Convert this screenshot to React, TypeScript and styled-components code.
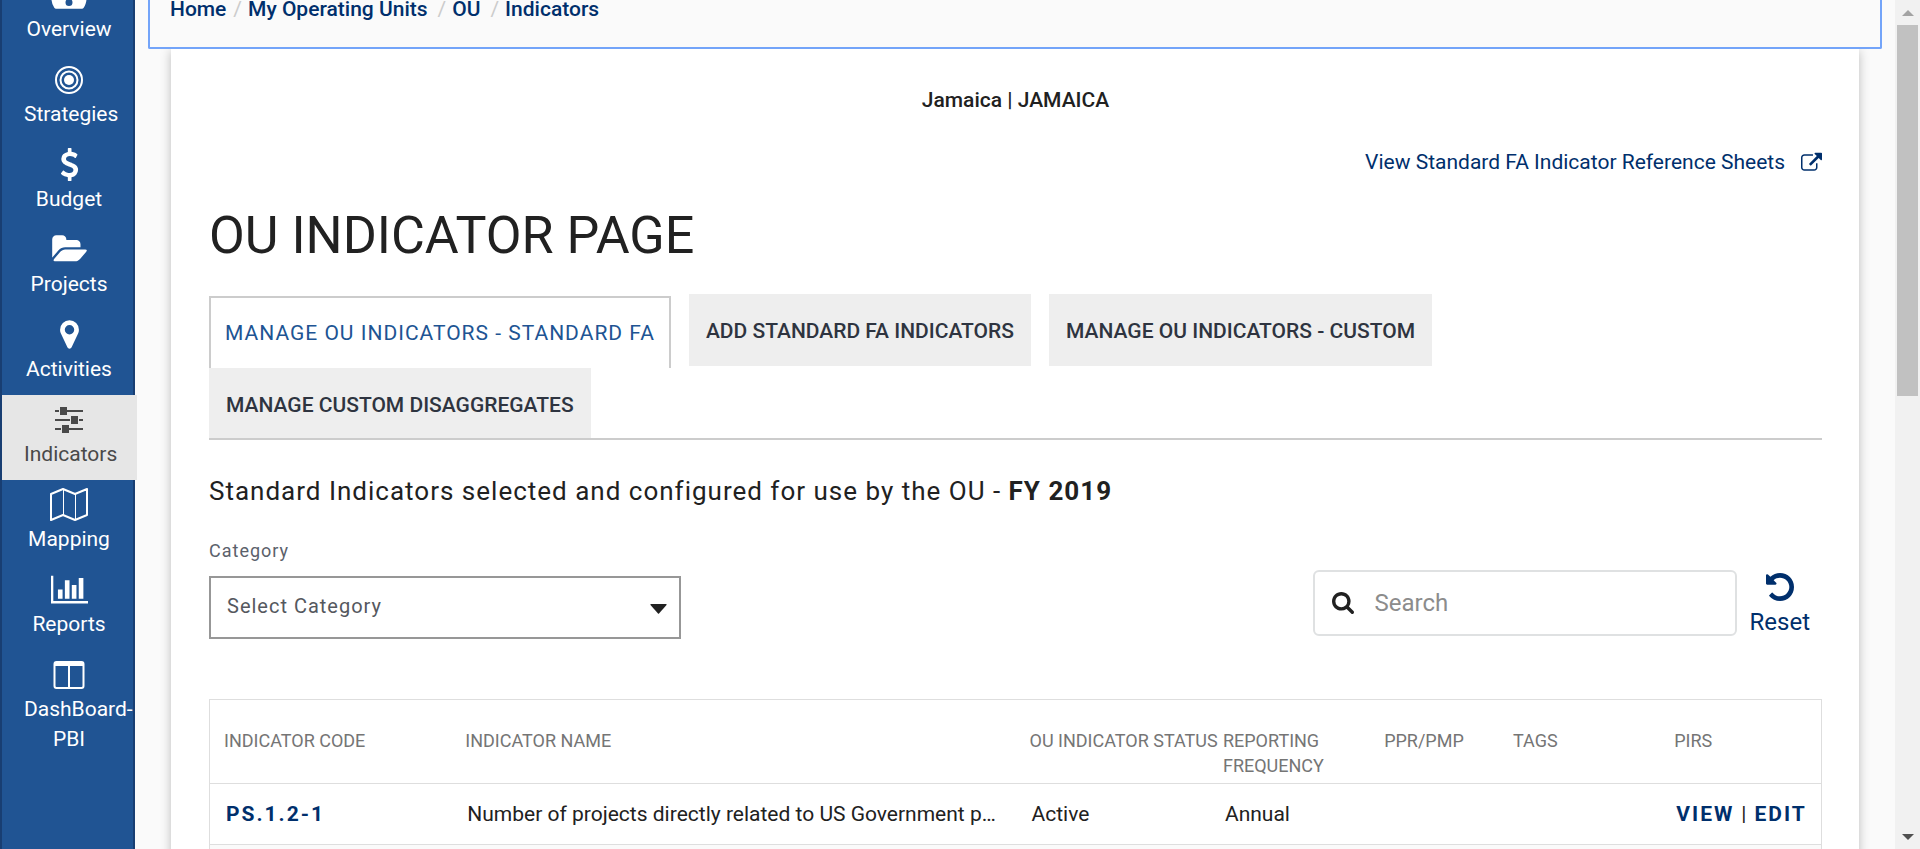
import React from 'react';
import styled, { createGlobalStyle, css } from 'styled-components';

const navy = '#002f6c';
const blue = '#205493';

const GlobalStyle = createGlobalStyle`
  *, *::before, *::after { box-sizing: border-box; }
  body {
    margin: 0;
    overflow: hidden;
    background: #fafafa;
    color: #212121;
    font-family: Roboto, "Liberation Sans", sans-serif;
    font-size: 21px;
    line-height: 30px;
  }
  a { color: ${navy}; text-decoration: none; }
`;

const Shell = styled.div`
  display: flex;
  height: 100vh;
  overflow: hidden;
`;

const Sidebar = styled.nav`
  flex: 0 0 135px;
  min-width: 0;
  height: 100vh;
  background: ${blue};
  border: solid #183e72;
  border-width: 0 2px;
`;

const NavList = styled.ul`
  list-style: none;
  margin: -30px 0 0;
  padding: 0;
`;

const NavLink = styled.a<{ $active?: boolean }>`
  display: block;
  width: 135px;
  min-height: 85px;
  padding: 8px 23px 11px 22px;
  color: #fff;
  text-align: center;
  ${p => p.$active && css`
    position: relative;
    background: #e6e6e6;
    color: #494949;
  `}
`;

const NavIcon = styled.span`
  display: flex;
  align-items: center;
  justify-content: center;
  height: 33px;
  margin-bottom: 3px;
  svg { display: block; }
`;

const Main = styled.main`
  flex: 1;
  min-width: 0;
  padding: 0 13px;
`;

const Breadcrumb = styled.nav`
  display: flex;
  height: 49px;
  padding: 0 20px;
  border: solid #73a4f9;
  border-width: 0 2px 2px;
  border-radius: 0 0 2px 2px;
  position: relative;
  z-index: 1;
  background: #fafafa;
`;

const Crumbs = styled.ol`
  display: flex;
  list-style: none;
  margin: -6px 0 0;
  padding: 0;
  font-weight: 500;
`;

const Crumb = styled.li<{ $gap?: number }>`
  &:not(:first-child)::before {
    content: '/';
    padding: 0 6px 0 ${p => p.$gap ?? 7}px;
    color: #ccc;
    font-weight: 400;
  }
`;

const Card = styled.section`
  margin: 0 23px;
  padding: 36px 37px 0 38px;
  background: #fff;
  box-shadow: 0 2px 10px rgba(0, 0, 0, 0.25);
`;

const UnitName = styled.p`
  margin: 0;
  text-align: center;
  font-weight: 500;
`;

const ReferenceLink = styled.div`
  margin-top: 32px;
  text-align: right;
  a { display: inline-flex; align-items: center; gap: 16px; }
`;

const Title = styled.h1`
  margin: 29px 0 28px;
  font-size: 52px;
  line-height: 60px;
  font-weight: 400;
`;

const Tabs = styled.div`
  position: relative;
  display: flex;
  flex-wrap: wrap;
  align-items: flex-start;
  column-gap: 18px;
  &::after {
    content: '';
    position: absolute;
    inset: auto 0 0;
    height: 2px;
    background: #ccc;
  }
`;

const Tab = styled.button<{ $active?: boolean }>`
  height: 72px;
  padding: 2px 15px 0;
  border: 2px solid #eee;
  background: #eee;
  color: #2e3440;
  font: 500 21px/30px Roboto, sans-serif;
  text-transform: uppercase;
  ${p => p.$active && css`
    margin-top: 2px;
    padding: 0 14px;
    border-color: #ccc;
    border-bottom: 0;
    background: #fff;
    color: ${blue};
    font-weight: 400;
    letter-spacing: 1px;
  `}
`;

const Subtitle = styled.h2`
  margin: 32px 0 0;
  font-size: 26px;
  line-height: 38px;
  font-weight: 400;
  letter-spacing: 1px;
  strong { font-weight: 700; }
`;

const Filters = styled.div`
  display: flex;
  justify-content: space-between;
  align-items: flex-end;
  height: 129px;
`;

const Field = styled.div`
  display: flex;
  flex-direction: column;
`;

const FieldLabel = styled.label`
  margin-bottom: 10px;
  color: #5b616b;
  font-size: 18px;
  letter-spacing: 1px;
`;

const SelectWrap = styled.div`
  display: grid;
  align-items: center;
  width: 472px;
  select, svg { grid-area: 1 / 1; }
  svg { justify-self: end; margin: 2px 14px 0 0; pointer-events: none; }
`;

const Select = styled.select`
  appearance: none;
  width: 100%;
  height: 63px;
  padding: 0 40px 4px 16px;
  border: 2px solid #979797;
  border-radius: 0;
  background: #fff;
  color: #55585e;
  font: 400 20px/30px Roboto, sans-serif;
  letter-spacing: 1px;
`;

const SearchArea = styled.div`
  display: flex;
  align-items: center;
  gap: 13px;
  margin: 0 12px 2px 0;
`;

const SearchBox = styled.label`
  display: flex;
  align-items: center;
  width: 424px;
  height: 66px;
  padding: 0 16px 0 17px;
  gap: 21px;
  border: 2px solid #dfe1e2;
  border-radius: 6px;
  input {
    flex: 1;
    min-width: 0;
    padding: 0;
    border: 0;
    outline: 0;
    background: none;
    font: 400 24px/30px Roboto, sans-serif;
    &::placeholder { color: #8c8c8c; opacity: 1; }
  }
`;

const ResetButton = styled.button`
  display: flex;
  flex-direction: column;
  align-items: center;
  gap: 6px;
  padding: 4px 0 0;
  border: 0;
  background: none;
  color: ${navy};
  font: 400 24px/30px Roboto, sans-serif;
`;

const Table = styled.table`
  width: 100%;
  margin-top: 60px;
  table-layout: fixed;
  border-collapse: collapse;
  border: 1px solid #dedede;
  text-align: left;
`;

const HeaderCell = styled.th<{ $width: string }>`
  width: ${p => p.$width};
  height: 84px;
  padding: 28px 0 0 14px;
  vertical-align: top;
  color: #757575;
  font-size: 18px;
  line-height: 25px;
  font-weight: 400;
`;

const HeaderLine = styled.div`
  white-space: nowrap;
`;

const Row = styled.tr`
  height: 61px;
  border-top: 1px solid #dedede;
  &:nth-child(even) { background: #fafafa; }
`;

const Cell = styled.td`
  padding: 0 0 0 16px;
  white-space: nowrap;
`;

const StrongLink = styled.a`
  font-weight: 700;
  letter-spacing: 2px;
`;

const Divider = styled.span`
  margin: 0 8px 0 7px;
`;

const ScrollTrack = styled.div`
  display: flex;
  flex-direction: column;
  flex: 0 0 25px;
  align-items: center;
  justify-content: space-between;
  height: 100vh;
  background: #f1f1f1;
`;

const ScrollArrow = styled.span<{ $down?: boolean }>`
  display: flex;
  flex: 0 0 25px;
  align-items: center;
  color: ${p => (p.$down ? '#505050' : '#a3a3a3')};
`;

const ScrollThumb = styled.span`
  width: 21px;
  height: 371px;
  margin-bottom: auto;
  background: #c1c1c1;
`;

const Glyph = ({ d, box, w, h }: { d: string; box: string; w: number; h: number }) => (
  <svg width={w} height={h} viewBox={box} fill="currentColor" aria-hidden="true"><path d={d} /></svg>
);

const Gauge = () => (
  <svg width="36" height="28" viewBox="0 0 36 28" fill="currentColor" aria-hidden="true">
    <path fillRule="evenodd" d="M18 0a17.500 17.500 0 0 1 17.500 17.500c0 3.500-1 6.600-2.800 9.300-.4.600-1 1-1.700 1H5c-.7 0-1.300-.4-1.700-1A17.500 17.500 0 0 1 18 0Zm0 18a3.500 3.500 0 1 0 0 7 3.500 3.500 0 0 0 0-7Z" />
  </svg>
);

const Target = () => (
  <svg width="30" height="30" viewBox="0 0 30 30" fill="none" stroke="currentColor" strokeWidth="2" aria-hidden="true">
    <circle cx="15" cy="15" r="13" /><circle cx="15" cy="15" r="8.500" />
    <circle cx="15" cy="15" r="5" fill="currentColor" stroke="none" />
  </svg>
);

const Dollar = () => (
  <Glyph w={33} h={33} box="0 0 1792 1792" d="M1362 1185q0 153-99.5 263.5t-258.5 136.5v175q0 14-9 23t-23 9h-135q-13 0-22.5-9.500t-9.500-22.500v-175q-66-9-127.500-31t-101.500-44.500-74-48-46.500-37.500-17.500-18q-17-21-2-41l103-135q7-10 23-12 15-2 24 9l2 2q113 99 243 125 37 8 74 8 81 0 142.500-43t61.500-122q0-28-15-53t-33.500-42-58.500-37.500-66-32-80-32.500q-39-16-61.500-25t-61.500-26.500-62.500-31-56.500-35.500-53.500-42.500-43.500-49-35.500-58-21-66.500-8.500-78q0-138 98-242t255-134v-180q0-13 9.500-22.500t22.500-9.500h135q14 0 23 9t9 23v176q57 6 110.500 23t87 33.500 63.500 37.500 39 29 15 14q17 18 5 38l-81 146q-8 15-23 16-14 3-27-7-3-3-14.500-12t-39-26.500-58.500-32-74.500-26-85.500-11.500q-95 0-155 43t-60 111q0 26 8.500 48t29.500 41.500 39.500 33 56 31 60.500 27 70 27.500q53 20 81 31.500t76 35 75.500 42.500 62 50 53 63.500 31.500 76.500 13 94z" />
);

const Folder = () => (
  <Glyph w={35} h={33} box="0 0 1879 1792" d="M1879 952q0 31-31 66l-336 396q-43 51-120.500 86.500t-143.500 35.500h-1088q-34 0-60.500-13t-26.500-43q0-31 31-66l336-396q43-51 120.500-86.500t143.500-35.500h1088q34 0 60.500 13t26.500 43zm-343-344v160h-832q-94 0-197 47.500t-164 119.500l-337 396-5 6q0-4-.5-12.500t-.5-12.500v-960q0-92 66-158t158-66h320q92 0 158 66t66 158v32h544q92 0 158 66t66 158z" />
);

const Pin = () => (
  <Glyph w={33} h={33} box="0 0 1792 1792" d="M1152 640q0-106-75-181t-181-75-181 75-75 181 75 181 181 75 181-75 75-181zm256 0q0 109-33 179l-364 774q-16 33-47.500 52t-67.500 19-67.500-19-46.500-52l-365-774q-33-70-33-179 0-212 150-362t362-150 362 150 150 362z" />
);

const Sliders = () => (
  <svg width="28" height="26" viewBox="0 0 28 26" fill="currentColor" aria-hidden="true">
    <path d="M0 3h4v2H0zM12 3h16v2H12zM5 0h7v8H5zM0 12h15v2H0zM24 12h4v2h-4zM16 9h7v8h-7zM0 21h6v2H0zM14 21h14v2H14zM7 18h7v8H7z" />
  </svg>
);

const MapSheet = () => (
  <svg width="38" height="34" viewBox="0 0 38 34" fill="none" stroke="currentColor" strokeWidth="2" strokeLinejoin="round" aria-hidden="true">
    <path d="M1 6 13 1l12 5 12-5v26l-12 5-12-5-12 5Z" />
    <path d="M13.500 2v25M25.500 6v26" strokeWidth="1" />
  </svg>
);

const Bars = () => (
  <Glyph w={37} h={33} box="0 0 2048 1792" d="M640 896v512h-256v-512h256zm384-512v1024h-256v-1024h256zm1024 1152v128h-2048v-1536h128v1408h1920zm-640-896v768h-256v-768h256zm384-384v1152h-256v-1152h256z" />
);

const Columns = () => (
  <svg width="32" height="28" viewBox="0 0 32 28" fill="none" stroke="currentColor" strokeWidth="2" aria-hidden="true">
    <rect x="1.500" y="1" width="29" height="26" rx="2" />
    <path d="M2 3h28" strokeWidth="4" /><path d="M16 4v23" />
  </svg>
);

const External = () => (
  <Glyph w={21} h={21} box="0 0 1792 1664" d="M1408 928v320q0 119-84.500 203.500t-203.500 84.500h-832q-119 0-203.500-84.500t-84.500-203.500v-832q0-119 84.500-203.500t203.500-84.500h704q14 0 23 9t9 23v64q0 14-9 23t-23 9h-704q-66 0-113 47t-47 113v832q0 66 47 113t113 47h832q66 0 113-47t47-113v-320q0-14 9-23t23-9h64q14 0 23 9t9 23zm384-864v512q0 26-19 45t-45 19-45-19l-176-176-652 652q-10 10-23 10t-23-10l-114-114q-10-10-10-23t10-23l652-652-176-176q-19-19-19-45t19-45 45-19h512q26 0 45 19t19 45z" />
);

const Magnifier = () => (
  <Glyph w={22} h={22} box="64 128 1664 1664" d="M1216 832q0-185-131.500-316.500t-316.500-131.500-316.500 131.500-131.500 316.500 131.500 316.500 316.500 131.500 316.500-131.500 131.500-316.500zm512 832q0 52-38 90t-90 38q-54 0-90-38l-343-342q-179 124-399 124-143 0-273.500-55.500t-225-150-150-225-55.500-273.500 55.500-273.500 150-225 225-150 273.500-55.500 273.500 55.500 225 150 150 225 55.500 273.500q0 220-124 399l343 343q37 37 37 90z" />
);

const Undo = () => (
  <Glyph w={28} h={28} box="128 128 1536 1536" d="M1664 896q0 156-61 298t-164 245-245 164-298 61q-172 0-327-72.500t-264-204.500q-7-10-6.500-22.500t8.500-20.500l137-138q10-9 25-9 16 2 23 12 73 95 179 147t225 52q104 0 198.500-40.500t163.500-109.500 109.500-163.500 40.500-198.500-40.500-198.500-109.500-163.500-163.500-109.500-198.500-40.500q-98 0-188 35.500t-160 101.500l137 138q31 30 14 69-17 40-59 40h-448q-26 0-45-19t-19-45v-448q0-42 40-59 39-17 69 14l130 129q107-101 244.500-156.500t284.500-55.500q156 0 298 61t245 164 164 245 61 298z" />
);

const navItems = [
  { label: 'Overview', icon: <Gauge /> },
  { label: 'Strategies', icon: <Target /> },
  { label: 'Budget', icon: <Dollar /> },
  { label: 'Projects', icon: <Folder /> },
  { label: 'Activities', icon: <Pin /> },
  { label: 'Indicators', icon: <Sliders />, active: true },
  { label: 'Mapping', icon: <MapSheet /> },
  { label: 'Reports', icon: <Bars /> },
  { label: 'DashBoard-PBI', icon: <Columns /> },
];

const crumbs = [
  { label: 'Home' },
  { label: 'My Operating Units' },
  { label: 'OU', gap: 10 },
  { label: 'Indicators', gap: 10 },
];

const tabs = [
  'Manage OU Indicators - Standard FA',
  'Add Standard FA Indicators',
  'Manage OU Indicators - Custom',
  'Manage Custom Disaggregates',
];

const columns = [
  { label: 'INDICATOR CODE', width: '15%' },
  { label: 'INDICATOR NAME', width: '35%' },
  { label: 'OU INDICATOR STATUS', width: '12%', nowrap: true },
  { label: 'REPORTING FREQUENCY', width: '10%' },
  { label: 'PPR/PMP', width: '8%' },
  { label: 'TAGS', width: '10%' },
  { label: 'PIRS', width: '10%' },
];

export default function App() {
  return (
    <>
      <GlobalStyle />
      <Shell>
        <Sidebar aria-label="Sections">
          <NavList>
            {navItems.map(item => (
              <li key={item.label}>
                <NavLink href="#" $active={item.active}>
                  <NavIcon>{item.icon}</NavIcon>
                  {item.label}
                </NavLink>
              </li>
            ))}
          </NavList>
        </Sidebar>
        <Main>
          <Breadcrumb aria-label="Breadcrumb">
            <Crumbs>
              {crumbs.map(c => (
                <Crumb key={c.label} $gap={c.gap}><a href="#">{c.label}</a></Crumb>
              ))}
            </Crumbs>
          </Breadcrumb>
          <Card>
            <UnitName>Jamaica | JAMAICA</UnitName>
            <ReferenceLink>
              <a href="#">View Standard FA Indicator Reference Sheets <External /></a>
            </ReferenceLink>
            <Title>OU INDICATOR PAGE</Title>
            <Tabs role="tablist">
              {tabs.map((t, i) => (
                <Tab key={t} type="button" role="tab" aria-selected={i === 0} $active={i === 0}>{t}</Tab>
              ))}
            </Tabs>
            <Subtitle>
              Standard Indicators selected and configured for use by the OU - <strong>FY 2019</strong>
            </Subtitle>
            <Filters>
              <Field>
                <FieldLabel htmlFor="category">Category</FieldLabel>
                <SelectWrap>
                  <Select id="category"><option>Select Category</option></Select>
                  <svg width="17" height="10" viewBox="0 0 17 10" fill="#212121" aria-hidden="true">
                    <path d="M1 0h15q1 0 .5 1L9 9.500q-.5.500-1 0L.5 1Q0 0 1 0Z" />
                  </svg>
                </SelectWrap>
              </Field>
              <SearchArea>
                <SearchBox>
                  <Magnifier />
                  <input type="search" placeholder="Search" aria-label="Search" />
                </SearchBox>
                <ResetButton type="button"><Undo />Reset</ResetButton>
              </SearchArea>
            </Filters>
            <Table>
              <thead>
                <tr>
                  {columns.map(c => (
                    <HeaderCell key={c.label} scope="col" $width={c.width}>
                      {c.nowrap ? <HeaderLine>{c.label}</HeaderLine> : c.label}
                    </HeaderCell>
                  ))}
                </tr>
              </thead>
              <tbody>
                <Row>
                  <Cell><StrongLink href="#">PS.1.2-1</StrongLink></Cell>
                  <Cell>Number of projects directly related to US Government p…</Cell>
                  <Cell>Active</Cell>
                  <Cell>Annual</Cell>
                  <Cell />
                  <Cell />
                  <Cell>
                    <StrongLink href="#">VIEW</StrongLink>
                    <Divider>|</Divider>
                    <StrongLink href="#">EDIT</StrongLink>
                  </Cell>
                </Row>
                <Row>
                  {columns.map(c => <Cell key={c.label} />)}
                </Row>
              </tbody>
            </Table>
          </Card>
        </Main>
        <ScrollTrack aria-hidden="true">
          <ScrollArrow>
            <svg width="12" height="6" viewBox="0 0 12 6" fill="currentColor"><path d="M0 6 6 0l6 6Z" /></svg>
          </ScrollArrow>
          <ScrollThumb />
          <ScrollArrow $down>
            <svg width="12" height="6" viewBox="0 0 12 6" fill="currentColor"><path d="M0 0h12L6 6Z" /></svg>
          </ScrollArrow>
        </ScrollTrack>
      </Shell>
    </>
  );
}
